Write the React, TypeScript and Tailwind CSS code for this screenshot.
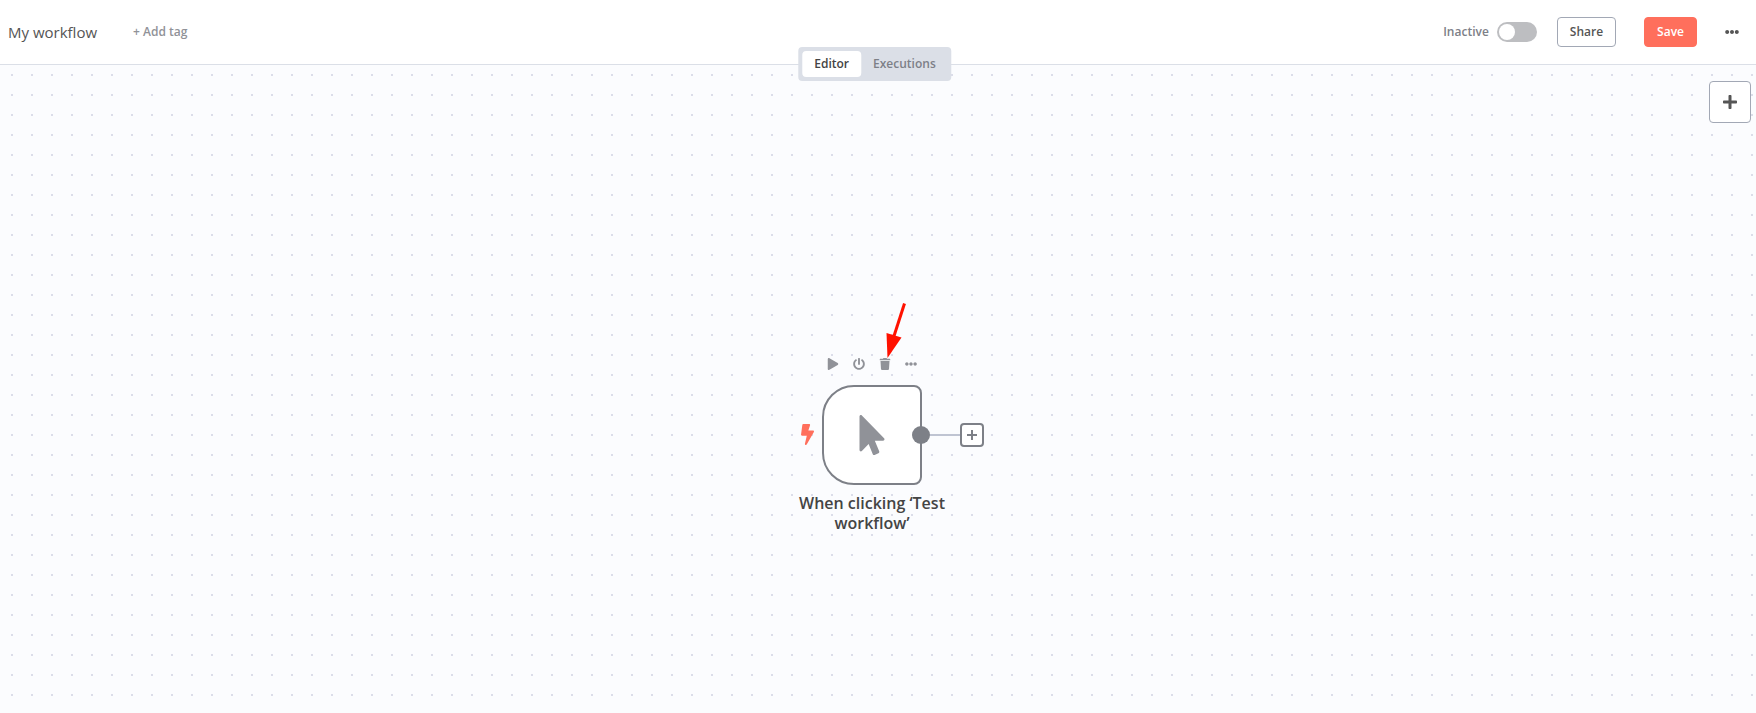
import { useState } from "react";
import {
  FaBolt,
  FaEllipsisH,
  FaMousePointer,
  FaPlay,
  FaPlus,
  FaPowerOff,
  FaTrash,
} from "react-icons/fa";

function Header() {
  const [active, setActive] = useState(false);

  return (
    <header className="flex h-[65px] items-center border-b border-[#dbdfe7] bg-white pr-[17px] pl-2">
      <h1 className="text-[15px] text-[#555555]">My workflow</h1>
      <button type="button" className="ml-9 text-xs font-semibold text-[#909298]">
        + Add tag
      </button>
      <div className="ml-auto flex items-center">
        <label className="flex items-center gap-2 text-xs font-semibold text-[#7d8087]">
          {active ? "Active" : "Inactive"}
          <input
            type="checkbox"
            role="switch"
            checked={active}
            onChange={() => setActive(!active)}
            className="h-5 w-10 appearance-none rounded-full bg-[#bdbec1] p-0.5 before:block before:size-4 before:rounded-full before:bg-white checked:bg-[#29a568] checked:before:translate-x-5"
          />
        </label>
        <button
          type="button"
          className="ml-5 h-[30px] rounded border border-[#a2a8b5] bg-white px-3 text-xs font-semibold text-[#555555]"
        >
          Share
        </button>
        <button
          type="button"
          className="ml-7 h-[30px] rounded border border-[#ff6f5c] bg-[#ff6f5c] px-3 text-xs font-semibold text-white"
        >
          Save
        </button>
        <button type="button" aria-label="More actions" className="ml-7 text-[#555555]">
          <FaEllipsisH size={14} />
        </button>
      </div>
    </header>
  );
}

function ViewTabs() {
  const [tab, setTab] = useState("Editor");

  return (
    <div
      role="tablist"
      className="absolute top-[47px] left-[calc(50%-3px)] flex -translate-x-1/2 rounded bg-[#dbdfe7] p-1"
    >
      {["Editor", "Executions"].map((name) => (
        <button
          key={name}
          type="button"
          role="tab"
          aria-selected={tab === name}
          onClick={() => setTab(name)}
          className={
            tab === name
              ? "h-[26px] rounded bg-white px-3 text-xs font-semibold text-[#444444]"
              : "h-[26px] rounded px-3 text-xs font-semibold text-[#7d8087]"
          }
        >
          {name}
        </button>
      ))}
    </div>
  );
}

const nodeActions = [
  { label: "Execute node", icon: <FaPlay size={12} /> },
  { label: "Deactivate node", icon: <FaPowerOff size={12} /> },
  { label: "Delete node", icon: <FaTrash size={12} /> },
  { label: "Node options", icon: <FaEllipsisH size={12} /> },
];

function TriggerNode() {
  return (
    <div className="absolute top-[320px] left-[calc(50%-56px)] size-[100px]">
      <div className="absolute -top-[34px] -left-0.5 flex">
        {nodeActions.map(({ label, icon }) => (
          <button
            key={label}
            type="button"
            aria-label={label}
            className="flex size-[26px] items-center justify-center text-[#909298]"
          >
            {icon}
          </button>
        ))}
      </div>

      <FaBolt className="absolute top-[39px] -left-[21px] h-[21px] w-[13px] text-[#ff6f5c]" />

      <div className="flex size-full items-center justify-center rounded-l-[32px] rounded-r-lg border-2 border-[#7d8087] bg-white text-[#909298]">
        <FaMousePointer size={40} />
      </div>

      <div className="absolute top-[38px] left-[90px] flex items-center">
        <span className="size-[18px] rounded-full bg-[#7d8087]" />
        <span className="h-0.5 w-[30px] bg-[#bfc4d2]" />
        <button
          type="button"
          aria-label="Add node"
          className="flex size-6 items-center justify-center rounded border-2 border-[#7d8087] bg-white text-[#7d8087]"
        >
          <svg width="10" height="10" viewBox="0 0 10 10" stroke="currentColor" strokeWidth="2">
            <path d="M5 0v10M0 5h10" />
          </svg>
        </button>
      </div>

      <p className="absolute top-[108px] -left-[30px] w-40 text-center text-base leading-5 font-semibold text-[#444444]">
        When clicking ‘Test workflow’
      </p>

      <svg
        className="absolute -top-[84px] left-[60px] text-[#ff1100]"
        width="28"
        height="60"
        viewBox="0 0 28 60"
      >
        <path d="M22.5 2.5L12 35" stroke="currentColor" strokeWidth="3" />
        <path d="M4.5 32L19.5 36.5L5.5 57Z" fill="currentColor" />
      </svg>
    </div>
  );
}

export default function App() {
  return (
    <div className="relative flex min-h-screen flex-col font-['Open_Sans',sans-serif]">
      <Header />
      <main className="relative flex min-h-[560px] grow items-start justify-end bg-[#fbfcfe] bg-[conic-gradient(at_2px_2px,transparent_270deg,#dbdde9_270deg)] bg-size-[20px_20px] bg-position-[11px_9px] px-[5px] py-4">
        <TriggerNode />
        <button
          type="button"
          aria-label="Open nodes panel"
          className="flex size-[42px] items-center justify-center rounded border border-[#a2a8b5] bg-white text-[#555555]"
        >
          <FaPlus size={16} />
        </button>
      </main>
      <ViewTabs />
    </div>
  );
}
